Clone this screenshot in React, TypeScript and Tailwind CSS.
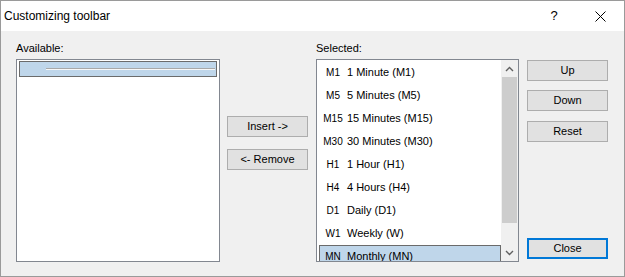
import React from 'react';

const items = [
  { code: 'M1', name: '1 Minute (M1)' },
  { code: 'M5', name: '5 Minutes (M5)' },
  { code: 'M15', name: '15 Minutes (M15)' },
  { code: 'M30', name: '30 Minutes (M30)' },
  { code: 'H1', name: '1 Hour (H1)' },
  { code: 'H4', name: '4 Hours (H4)' },
  { code: 'D1', name: 'Daily (D1)' },
  { code: 'W1', name: 'Weekly (W)' },
  { code: 'MN', name: 'Monthly (MN)' },
];

function Button({ label, className = '', primary = false }: { label: string; className?: string; primary?: boolean }) {
  return (
    <button
      className={`h-[21px] w-[81px] bg-[#e1e1e1] text-[11px] leading-none text-black ${
        primary ? 'border-2 border-[#0078d7]' : 'border border-[#adadad]'
      } ${className}`}
    >
      {label}
    </button>
  );
}

export default function App() {
  return (
    <div className="w-[625px] h-[277px] flex flex-col border border-[#9a9a9a] bg-[#f0f0f0] font-['Liberation_Sans',Arial,sans-serif] text-black select-none overflow-hidden">
      {/* title bar */}
      <div className="h-[30px] shrink-0 bg-white flex items-center">
        <span className="pl-[3px] text-[12px]">Customizing toolbar</span>
        <span className="ml-auto w-[46px] text-center text-[13px]">?</span>
        <div className="w-[46px] flex items-center justify-center mr-[1px]">
          <svg width="11" height="11" viewBox="0 0 11 11">
            <path d="M0.5 0.5 L10.5 10.5 M10.5 0.5 L0.5 10.5" stroke="#000" strokeWidth="1" />
          </svg>
        </div>
      </div>

      {/* body */}
      <div className="flex flex-1 text-[11px]">
        {/* available */}
        <div className="ml-[15px] w-[204px] flex flex-col">
          <div className="h-[28px] pt-[11px] leading-[13px]">Available:</div>
          <div className="h-[203px] bg-white border border-[#828790] pt-[1px] px-[2px]">
            <div className="h-[16px] bg-[#bfd6ea] border border-[#6b6b6b] flex items-center pl-[26px] pr-[1px]">
              <div className="w-full h-[2px] border-t border-[#a8a8a8] border-b border-b-[#f8f8f8]" />
            </div>
          </div>
        </div>

        {/* insert / remove */}
        <div className="ml-[7px] w-[81px] flex flex-col pt-[85px] gap-[12px]">
          <Button label="Insert ->" />
          <Button label="<- Remove" />
        </div>

        {/* selected */}
        <div className="ml-[8px] w-[203px] flex flex-col">
          <div className="h-[28px] pt-[11px] leading-[13px]">Selected:</div>
          <div className="h-[203px] bg-white border border-[#828790] flex overflow-hidden">
            <div className="flex-1 pt-[1px] overflow-hidden">
              {items.map((it) => {
                const sel = it.code === 'MN';
                return (
                  <div
                    key={it.code}
                    className={`h-[23px] flex items-center ml-[2px] ${
                      sel ? 'bg-[#bfd6ea] border border-[#6b6b6b]' : 'border border-transparent'
                    }`}
                  >
                    <span className="w-[26px] text-center text-[10px]">{it.code}</span>
                    <span className="pl-[1px]">{it.name}</span>
                  </div>
                );
              })}
            </div>
            {/* scrollbar */}
            <div className="w-[17px] bg-[#f0f0f0] flex flex-col">
              <div className="h-[17px] flex items-center justify-center">
                <svg width="9" height="6" viewBox="0 0 9 6">
                  <path d="M1 5 L4.5 1.5 L8 5" stroke="#606060" strokeWidth="1.4" fill="none" />
                </svg>
              </div>
              <div className="h-[146px] bg-[#cdcdcd] mx-[1px]" />
              <div className="flex-1" />
              <div className="h-[17px] flex items-center justify-center">
                <svg width="9" height="6" viewBox="0 0 9 6">
                  <path d="M1 1 L4.5 4.5 L8 1" stroke="#606060" strokeWidth="1.4" fill="none" />
                </svg>
              </div>
            </div>
          </div>
        </div>

        {/* right buttons */}
        <div className="ml-[8px] w-[81px] flex flex-col pt-[29px]">
          <Button label="Up" />
          <Button label="Down" className="mt-[9px]" />
          <Button label="Reset" className="mt-[10px]" />
          <Button label="Close" primary className="mt-[96px]" />
        </div>
      </div>
    </div>
  );
}
